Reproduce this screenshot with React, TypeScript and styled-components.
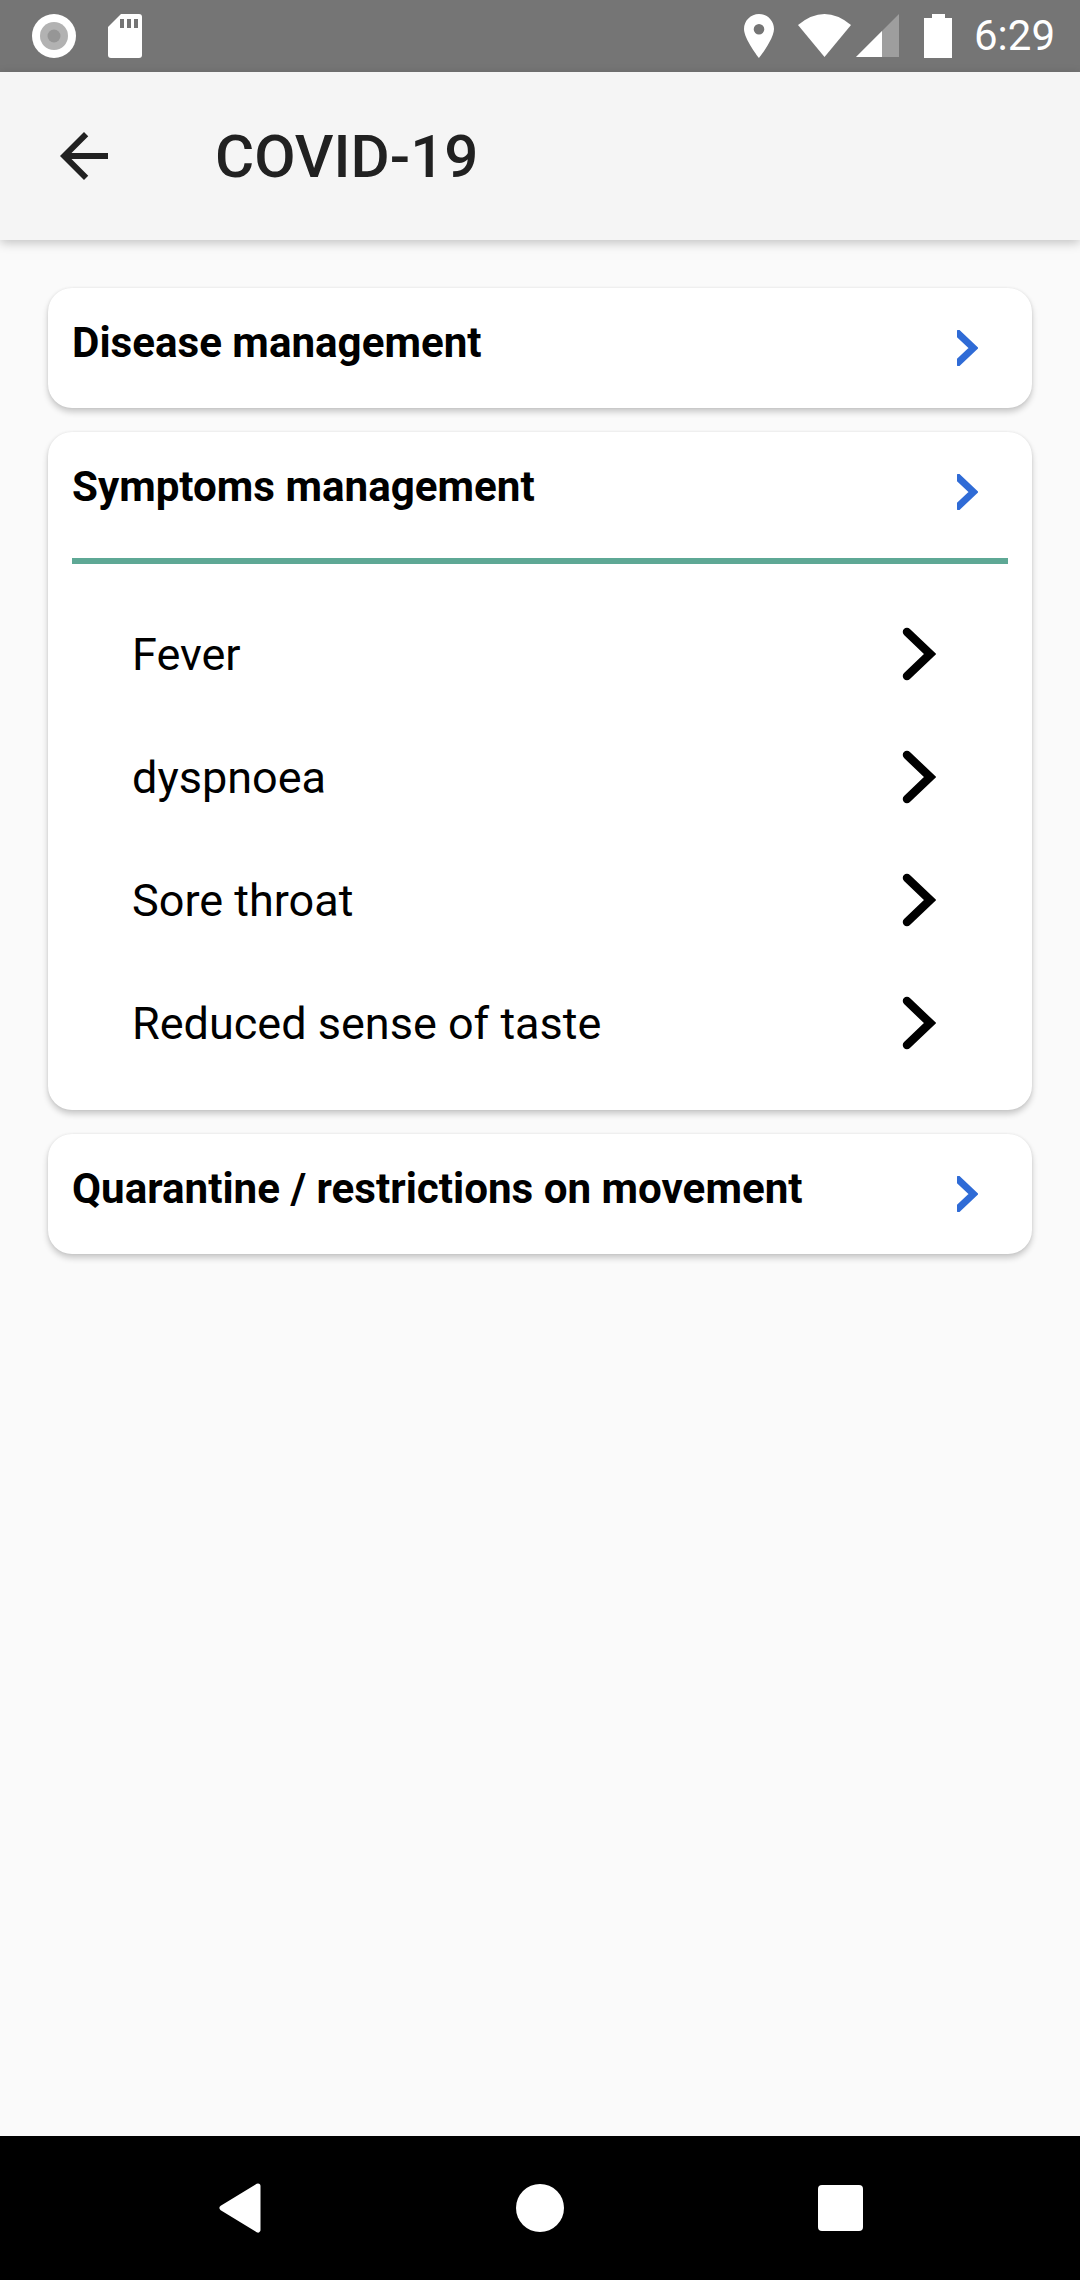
import React from "react";
import styled, { createGlobalStyle } from "styled-components";

const SYMPTOMS = ["Fever", "dyspnoea", "Sore throat", "Reduced sense of taste"];

const GlobalStyle = createGlobalStyle`
  html, body {
    margin: 0;
    padding: 0;
    background: #fafafa;
  }
  * {
    box-sizing: border-box;
  }
`;

const App: React.FC = () => {
  return (
    <Screen>
      <GlobalStyle />
      <StatusBar>
        <StatusGroup>
          <svg width="44" height="44" viewBox="0 0 44 44">
            <circle cx="22" cy="22" r="22" fill="#fff" />
            <circle cx="22" cy="22" r="14" fill="#b2b2b2" />
            <circle cx="22" cy="22" r="6.5" fill="#969696" />
          </svg>
          <svg width="34" height="44" viewBox="0 0 34 44">
            <path
              d="M13 0H31Q34 0 34 3V41Q34 44 31 44H3Q0 44 0 41V13Z"
              fill="#fff"
            />
            <path d="M12 5h4v9h-4zM19 5h4v9h-4zM26 5h4v9h-4z" fill="#757575" />
          </svg>
        </StatusGroup>
        <StatusRight>
          <svg width="30" height="44" viewBox="0 0 30 44">
            <path
              fillRule="evenodd"
              d="M15 0C6.7 0 0 6.7 0 15C0 25 15 44 15 44S30 25 30 15C30 6.7 23.3 0 15 0ZM15 10A5.3 5.3 0 1 1 15 20.6A5.3 5.3 0 1 1 15 10Z"
              fill="#fff"
            />
          </svg>
          <WifiIcon width="53" height="44" viewBox="0 0 53 44">
            <path d="M0 11Q26.5 -11 53 11L26.5 43Z" fill="#fff" />
          </WifiIcon>
          <SignalIcon width="43" height="44" viewBox="0 0 43 44">
            <path d="M43 0V43H0Z" fill="#fff" opacity="0.3" />
            <path d="M0 43L26 17V43Z" fill="#fff" />
          </SignalIcon>
          <BatteryIcon width="28" height="44" viewBox="0 0 28 44">
            <path d="M8 0H21V4H28V44H0V4H8Z" fill="#fff" />
          </BatteryIcon>
          <Clock>6:29</Clock>
        </StatusRight>
      </StatusBar>

      <AppBar>
        <svg width="72" height="72" viewBox="0 0 24 24">
          <path
            d="M20 11H7.83l5.59-5.59L12 4l-8 8 8 8 1.41-1.41L7.83 13H20v-2z"
            fill="#212121"
          />
        </svg>
        <Title>COVID-19</Title>
      </AppBar>

      <Content>
        <Card>
          <CardHeader>
            <CardTitle>Disease management</CardTitle>
            <BlueChevron />
          </CardHeader>
        </Card>

        <Card $open>
          <CardHeader>
            <CardTitle>Symptoms management</CardTitle>
            <BlueChevron />
          </CardHeader>
          <Divider />
          <ItemList>
            {SYMPTOMS.map((name) => (
              <Item key={name}>
                <ItemLabel>{name}</ItemLabel>
                <ItemChevron width="34" height="54" viewBox="0 0 34 54">
                  <path
                    d="M5 5L28 27L5 49"
                    fill="none"
                    stroke="#000"
                    strokeWidth="8.5"
                    strokeLinecap="round"
                    strokeLinejoin="miter"
                  />
                </ItemChevron>
              </Item>
            ))}
          </ItemList>
        </Card>

        <Card>
          <CardHeader>
            <CardTitle>Quarantine / restrictions on movement</CardTitle>
            <BlueChevron />
          </CardHeader>
        </Card>
      </Content>

      <NavBar>
        <NavSlot>
          <svg width="44" height="52" viewBox="0 0 44 52">
            <path
              d="M40 4L4 26L40 48Z"
              fill="#fff"
              stroke="#fff"
              strokeWidth="5"
              strokeLinejoin="round"
            />
          </svg>
        </NavSlot>
        <NavSlot>
          <HomeDot />
        </NavSlot>
        <NavSlot>
          <RecentSquare />
        </NavSlot>
      </NavBar>
    </Screen>
  );
};

export default App;

const BlueChevron: React.FC = () => (
  <ChevronIcon width="21" height="36" viewBox="0 0 21 36">
    <path
      d="M-1 1.5L16.5 18L-1 34.5"
      fill="none"
      stroke="#2f6bd6"
      strokeWidth="7"
    />
  </ChevronIcon>
);

const Screen = styled.div`
  display: flex;
  flex-direction: column;
  width: 1080px;
  height: 2280px;
  overflow: hidden;
  background-color: #fafafa;
  font-family: Roboto, "Liberation Sans", sans-serif;
`;

const StatusBar = styled.div`
  display: flex;
  align-items: center;
  justify-content: space-between;
  flex: none;
  height: 72px;
  padding: 0 25px 0 32px;
  background-color: #757575;
`;

const StatusGroup = styled.div`
  display: flex;
  align-items: center;
  gap: 32px;
`;

const StatusRight = styled.div`
  display: flex;
  align-items: center;
`;

const WifiIcon = styled.svg`
  margin-left: 24px;
`;

const SignalIcon = styled.svg`
  margin-left: 5px;
`;

const BatteryIcon = styled.svg`
  margin-left: 25px;
`;

const Clock = styled.span`
  margin-left: 22px;
  font-size: 42px;
  line-height: 44px;
  color: #fff;
`;

const AppBar = styled.header`
  position: relative;
  display: flex;
  align-items: center;
  flex: none;
  height: 168px;
  padding-left: 48px;
  background-color: #f5f5f5;
  box-shadow: 0 3px 10px rgba(0, 0, 0, 0.22);
`;

const Title = styled.h1`
  margin: 0 0 0 95px;
  font-size: 60px;
  font-weight: 500;
  color: #212121;
`;

const Content = styled.main`
  display: flex;
  flex-direction: column;
  flex: 1;
  gap: 24px;
  padding: 48px 48px 0;
`;

const Card = styled.section<{ $open?: boolean }>`
  height: ${(props) => (props.$open ? "678px" : "120px")};
  padding: 30px 54px 0 24px;
  background-color: #fff;
  border-radius: 24px;
  box-shadow: 0 4px 6px rgba(0, 0, 0, 0.2), 0 0 3px rgba(0, 0, 0, 0.08);
`;

const CardHeader = styled.div`
  display: flex;
  align-items: flex-start;
  justify-content: space-between;
  height: 50px;
`;

const CardTitle = styled.h2`
  margin: 0;
  font-size: 42.15px;
  line-height: 50px;
  font-weight: 700;
  color: #000;
`;

const ChevronIcon = styled.svg`
  flex: none;
  margin-top: 12px;
`;

const Divider = styled.div`
  height: 6px;
  margin: 46px -30px 0 0;
  background-color: #5ea895;
`;

const ItemList = styled.ul`
  margin: 0;
  padding: 29px 42px 0 60px;
  list-style: none;
`;

const Item = styled.li`
  display: flex;
  align-items: center;
  justify-content: space-between;
  height: 123px;
`;

const ItemLabel = styled.span`
  font-size: 45px;
  color: #000;
`;

const ItemChevron = styled.svg`
  margin-bottom: 2px;
`;

const NavBar = styled.nav`
  display: flex;
  align-items: center;
  justify-content: center;
  flex: none;
  gap: 180px;
  height: 144px;
  background-color: #000;
`;

const NavSlot = styled.div`
  display: flex;
  align-items: center;
  justify-content: center;
  width: 120px;
  height: 72px;
`;

const HomeDot = styled.div`
  width: 48px;
  height: 48px;
  border-radius: 50%;
  background-color: #fff;
`;

const RecentSquare = styled.div`
  width: 45px;
  height: 46px;
  border-radius: 4px;
  background-color: #fff;
`;
